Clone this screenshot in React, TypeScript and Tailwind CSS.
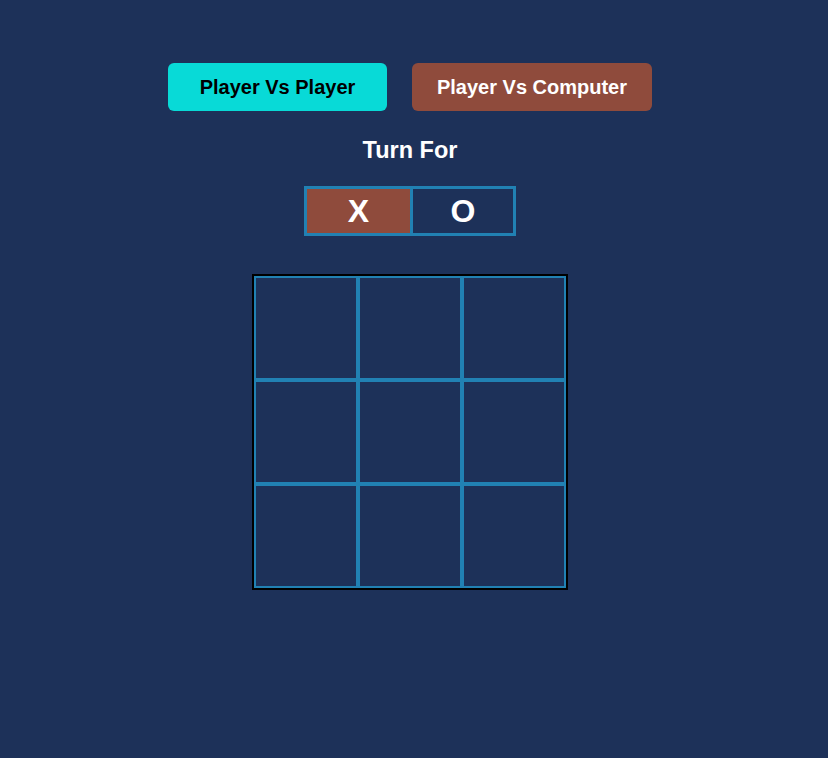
export default function App() {
  const cells = Array.from({ length: 9 });

  return (
    <div
      className="min-h-screen w-full bg-[#1d3159]"
      style={{ fontFamily: '"Liberation Sans", Arial, sans-serif' }}
    >
      <div className="w-[820px] flex flex-col items-center pt-[63px]">
        <div className="flex gap-[25px]">
          <button
            type="button"
            className="w-[219px] h-[48px] rounded-md bg-[#08dad7] text-black text-[20px] font-bold"
          >
            Player Vs Player
          </button>
          <button
            type="button"
            className="w-[240px] h-[48px] rounded-md bg-[#8f4b3c] text-white text-[20px] font-bold"
          >
            Player Vs Computer
          </button>
        </div>

        <h2 className="mt-[26px] text-[23.5px] leading-[26px] font-bold text-white">Turn For</h2>

        <div className="mt-[23px] flex border-[3px] border-[#2181b3] h-[50px]">
          <div className="w-[106px] bg-[#8f4b3c] border-r-[3px] border-[#2181b3] flex items-center justify-center text-white text-[32px] font-bold">
            X
          </div>
          <div className="w-[100px] flex items-center justify-center text-white text-[32px] font-bold">
            O
          </div>
        </div>

        <div className="mt-[38px] border-2 border-black grid grid-cols-3 w-[316px]">
          {cells.map((_, i) => (
            <div key={i} className="h-[104px] border-2 border-[#2181b3]" />
          ))}
        </div>
      </div>
    </div>
  );
}
